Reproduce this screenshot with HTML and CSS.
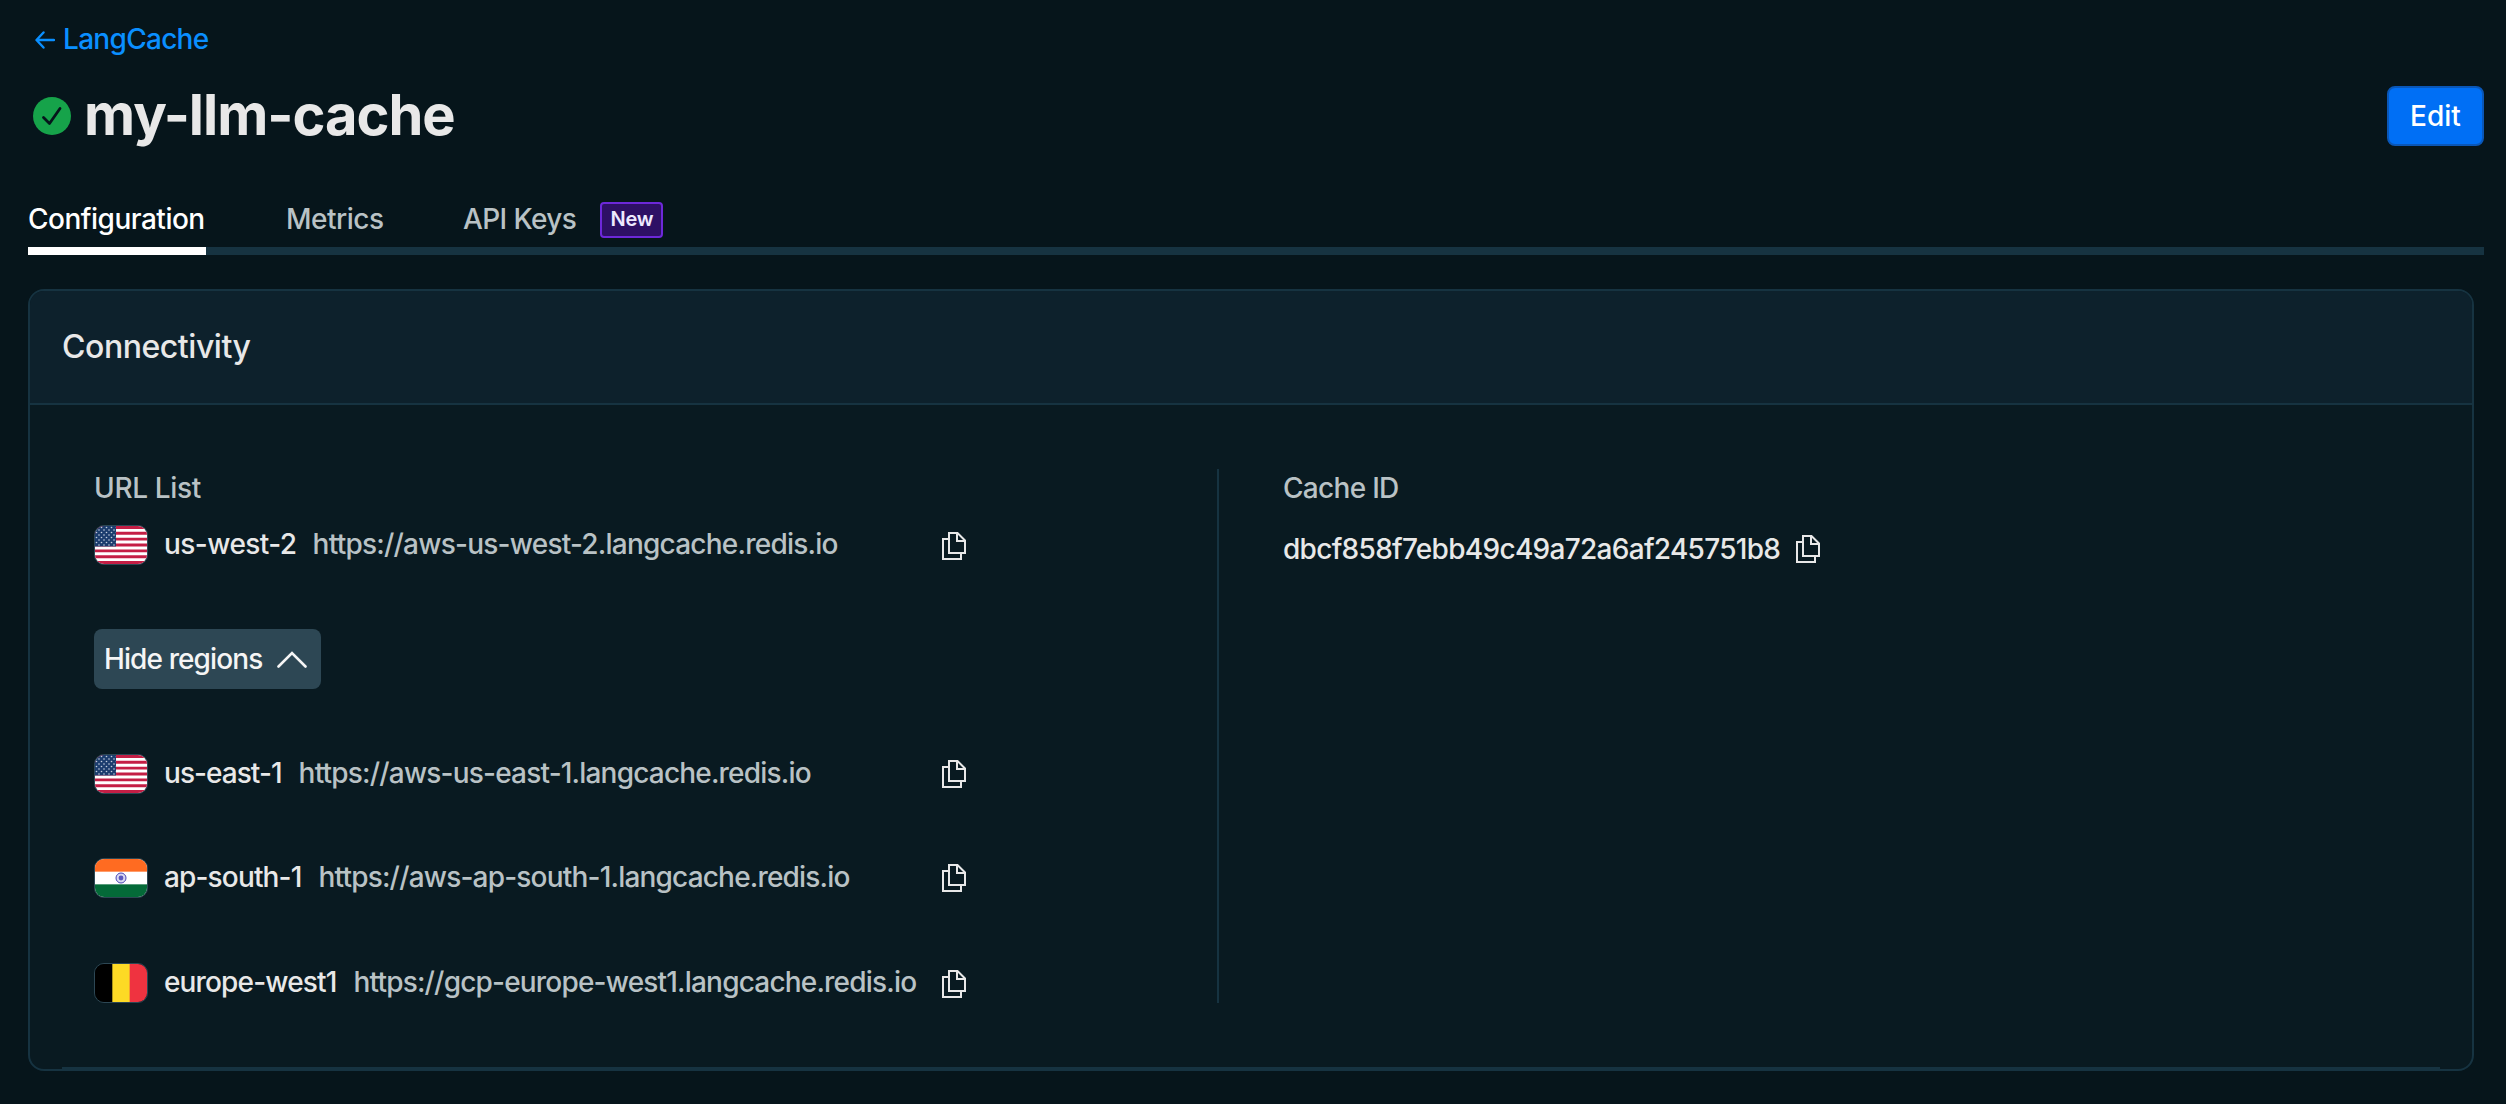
FILE: index.html
```html
<!DOCTYPE html>
<html lang="en">
<head>
  <meta charset="utf-8">
  <title>my-llm-cache</title>
  <link rel="stylesheet" href="styles.css">
</head>
<body>
  <!-- shared icons -->
  <svg class="sprite" width="0" height="0">
    <symbol id="copy" viewBox="0 0 24 28">
      <path d="M7 1h8.500L23 8.500V21H7zM15 1v8h8M7 7H1v20h18v-6" fill="none" stroke="currentColor" stroke-width="2"/>
    </symbol>
    <pattern id="stars" width="5" height="5" patternUnits="userSpaceOnUse">
      <circle cx="1.500" cy="1.500" r=".8" fill="#c3cede"/>
      <circle cx="4" cy="4" r=".8" fill="#c3cede"/>
    </pattern>
    <symbol id="flag-us" viewBox="0 0 52 38" preserveAspectRatio="none">
      <rect width="52" height="38" fill="#fff"/>
      <path d="M0 1.460h52M0 7.310h52M0 13.150h52M0 19h52M0 24.850h52M0 30.690h52M0 36.540h52" stroke="#c41e45" stroke-width="2.920"/>
      <rect width="21" height="20.460" fill="#1c3d6e"/>
      <rect width="21" height="20.460" fill="url(#stars)"/>
    </symbol>
    <symbol id="flag-in" viewBox="0 0 52 38" preserveAspectRatio="none">
      <rect width="52" height="38" fill="#fff"/>
      <rect width="52" height="12.660" fill="#ff6b21"/>
      <rect y="25.340" width="52" height="12.660" fill="#046a38"/>
      <circle cx="26" cy="19" r="5" fill="#d9d9f0" stroke="#4a46b5" stroke-width="1"/>
      <circle cx="26" cy="19" r="2.400" fill="#5c58bd"/>
    </symbol>
    <symbol id="flag-be" viewBox="0 0 52 38" preserveAspectRatio="none">
      <rect width="18" height="38" fill="#000"/>
      <rect x="17.330" width="17.670" height="38" fill="#fdda25"/>
      <rect x="34.670" width="17.330" height="38" fill="#ef3340"/>
    </symbol>
  </svg>

  <a class="back" href="#">
    <svg width="20" height="18" viewBox="0 0 20 18"><path d="M19 9H2M8.500 1.500L1.500 9L8.500 16.500" fill="none" stroke="currentColor" stroke-width="2.400" stroke-linecap="round" stroke-linejoin="round"/></svg>
    <span>LangCache</span>
  </a>

  <div class="title-row">
    <svg class="status" viewBox="0 0 38 38"><circle cx="19" cy="19" r="19" fill="#16a34a"/><path d="M10.500 20.500L16.500 26.500L27 11.500" fill="none" stroke="#06151b" stroke-width="2.800" stroke-linecap="round" stroke-linejoin="round"/></svg>
    <h1>my-llm-cache</h1>
    <button class="edit">Edit</button>
  </div>

  <div class="tabs">
    <div class="tab active">Configuration</div>
    <div class="tab metrics">Metrics</div>
    <div class="tab keys"><span>API Keys</span> <span class="badge">New</span></div>
  </div>

  <div class="card">
    <div class="card-header"><h2>Connectivity</h2></div>
    <div class="card-body">
      <div class="urls">
        <div class="label list-label">URL List</div>
        <div class="row first">
          <svg class="flag"><use href="#flag-us"/></svg>
          <span class="region us-west">us-west-2</span>
          <span class="url">https://aws-us-west-2.langcache.redis.io</span>
          <svg class="copy"><use href="#copy"/></svg>
        </div>
        <button class="toggle">
          <span>Hide regions</span>
          <svg class="chevron" viewBox="0 0 30 17"><path d="M1.500 15.500L15 2L28.500 15.500" fill="none" stroke="currentColor" stroke-width="2.600" stroke-linecap="round"/></svg>
        </button>
        <div class="row">
          <svg class="flag"><use href="#flag-us"/></svg>
          <span class="region us-east">us-east-1</span>
          <span class="url">https://aws-us-east-1.langcache.redis.io</span>
          <svg class="copy"><use href="#copy"/></svg>
        </div>
        <div class="row">
          <svg class="flag"><use href="#flag-in"/></svg>
          <span class="region">ap-south-1</span>
          <span class="url">https://aws-ap-south-1.langcache.redis.io</span>
          <svg class="copy"><use href="#copy"/></svg>
        </div>
        <div class="row last">
          <svg class="flag"><use href="#flag-be"/></svg>
          <span class="region">europe-west1</span>
          <span class="url">https://gcp-europe-west1.langcache.redis.io</span>
          <svg class="copy"><use href="#copy"/></svg>
        </div>
      </div>
      <div class="cache-id">
        <div class="label">Cache ID</div>
        <div class="id-row">
          <span class="id">dbcf858f7ebb49c49a72a6af245751b8</span>
          <svg class="copy"><use href="#copy"/></svg>
        </div>
      </div>
    </div>
  </div>
</body>
</html>
```
FILE: styles.css
```css
* {
  box-sizing: border-box;
}

body {
  margin: 0;
  padding: 22px 22px 0 28px;
  background: #06151b;
  color: #e8e8e8;
  font-family: Inter, "Liberation Sans", sans-serif;
  font-size: 28px;
  font-weight: 450;
  line-height: 36px;
  white-space: nowrap;
}

svg {
  flex-shrink: 0;
}

.sprite {
  position: absolute;
}

.back {
  display: flex;
  align-items: center;
  gap: 8px;
  height: 36px;
  padding-left: 7px;
  color: #0a8fff;
  letter-spacing: -0.7px;
  text-decoration: none;
}

.back span {
  padding-bottom: 2px;
}

.title-row {
  display: flex;
  align-items: center;
  height: 60px;
  margin-top: 28px;
  padding-left: 5px;
}

.status {
  width: 38px;
  height: 38px;
  margin-right: 13px;
}

h1 {
  margin: 0;
  padding-bottom: 2px;
  font-size: 56px;
  font-weight: 650;
  letter-spacing: -1px;
  line-height: 60px;
}

.edit {
  width: 97px;
  height: 60px;
  margin-left: auto;
  padding: 0 0 1px;
  border: 2px solid #0a57b8;
  border-radius: 8px;
  background: #006ff5;
  color: #fff;
  font: 500 28px/36px Inter, sans-serif;
}

.tabs {
  display: flex;
  height: 55px;
  margin-top: 54px;
  border-bottom: 8px solid #163341;
  color: #b9c2c5;
}

.tab {
  height: 55px;
  padding-top: 1px;
  letter-spacing: -0.5px;
}

.active {
  width: 178px;
  margin-right: 80px;
  border-bottom: 8px solid #fff;
  color: #fff;
  font-weight: 550;
  letter-spacing: -0.5px;
}

.metrics {
  width: 97px;
  margin-right: 80px;
}

.keys {
  display: flex;
  letter-spacing: -0.6px;
}

.badge {
  width: 63px;
  height: 36px;
  margin-top: 1px;
  margin-left: 24px;
  border: 2px solid #6d28d9;
  border-radius: 4px;
  background: #2e1065;
  color: #ede9fe;
  font-size: 20px;
  font-weight: 600;
  letter-spacing: -0.2px;
  line-height: 31px;
  text-align: center;
}

.card {
  width: 2446px;
  height: 782px;
  margin-top: 34px;
  border: 2px solid #163341;
  border-radius: 16px;
  background: #091a21;
  overflow: hidden;
}

.card-header {
  height: 114px;
  padding: 36px 32px;
  border-bottom: 2px solid #163341;
  background: #0d212c;
}

h2 {
  margin: 0;
  font-size: 32px;
  font-weight: 550;
  letter-spacing: -0.45px;
  line-height: 40px;
}

.card-body {
  display: flex;
  height: 664px;
  margin: 0 32px;
  padding: 64px 32px;
  border-bottom: 2px solid #163341;
}

.label {
  height: 56px;
  padding-top: 1px;
  color: #b9c2c5;
  letter-spacing: -0.7px;
}

.list-label {
  letter-spacing: -0.35px;
}

.urls {
  width: 1125px;
  border-right: 2px solid #163341;
}

.row {
  display: flex;
  align-items: center;
  width: 872px;
  height: 40px;
  margin-bottom: 64px;
}

.last {
  margin-top: 65px;
}

.flag {
  width: 54px;
  height: 40px;
  border: 1px solid #2d4754;
  border-radius: 10px;
}

.region {
  margin: 0 17px 0 16px;
  padding-bottom: 2px;
  font-weight: 500;
  letter-spacing: -0.85px;
}

.us-west {
  margin-right: 16px;
  letter-spacing: -0.55px;
}

.us-east {
  letter-spacing: -0.95px;
}

.url {
  padding-bottom: 2px;
  color: #b9c2c5;
  letter-spacing: -0.81px;
}

.us-west + .url {
  letter-spacing: -0.77px;
}

.copy {
  width: 24px;
  height: 28px;
  margin-left: auto;
}

.first .copy,
.last .copy {
  margin-top: 2px;
}

.toggle {
  display: flex;
  align-items: center;
  justify-content: space-between;
  width: 227px;
  height: 60px;
  margin-bottom: 65px;
  padding: 0 14px 0 10px;
  border: 0;
  border-radius: 8px;
  background: #2d4754;
  color: #f5f5f5;
  font: 450 28px/36px Inter, sans-serif;
  letter-spacing: -0.9px;
}

.chevron {
  width: 30px;
  height: 17px;
}

.cache-id {
  padding-left: 64px;
}

.id-row {
  display: flex;
  align-items: center;
  width: 537px;
  margin-top: 6px;
  font-weight: 500;
  letter-spacing: -0.7px;
}
```
